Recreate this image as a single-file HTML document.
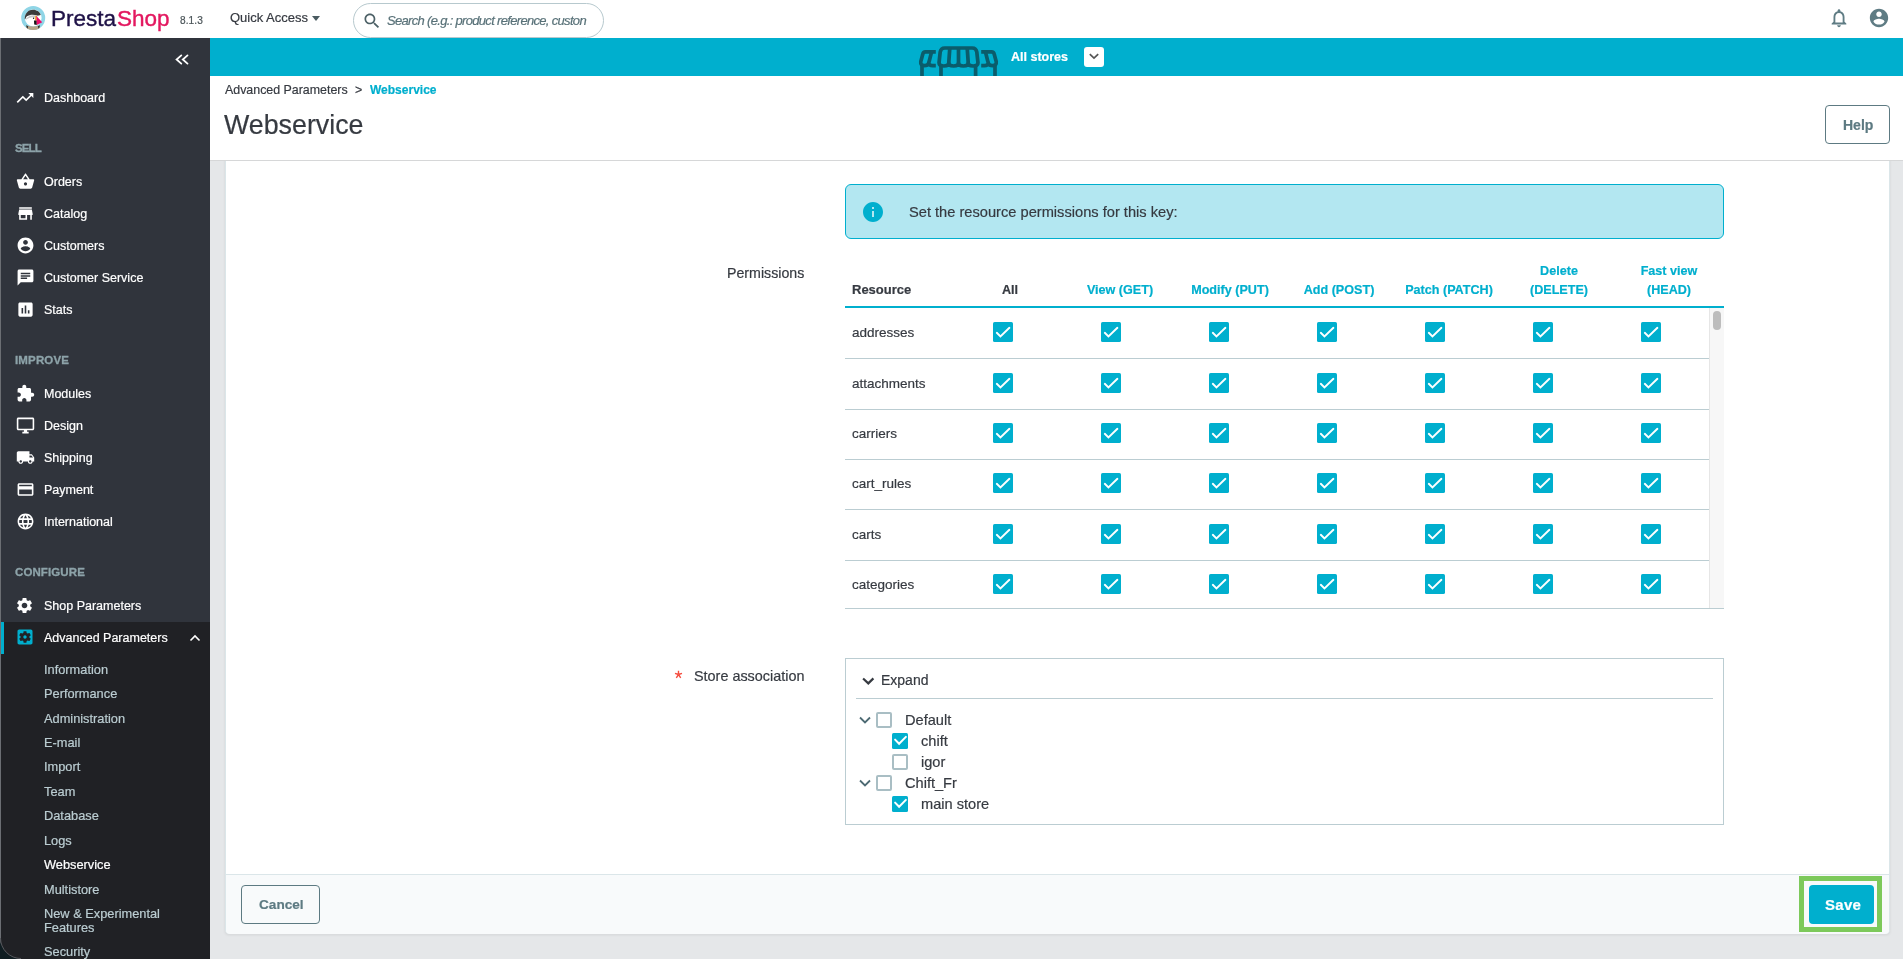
<!DOCTYPE html>
<html><head><meta charset="utf-8"><title>Webservice</title>
<style>
html,body{margin:0;padding:0;width:1903px;height:959px;overflow:hidden;background:#e5e7e9;font-family:"Liberation Sans",sans-serif}
.box{position:absolute;box-sizing:content-box}
.t{position:absolute;line-height:1;white-space:nowrap;will-change:transform;-webkit-text-stroke:0.2px currentColor}
.ic{position:absolute;overflow:visible}
</style></head><body>
<div class="box" style="left:210px;top:76px;width:1693px;height:883px;background:#e5e7e9"></div>
<div class="box" style="left:225px;top:60px;width:1663px;height:872px;background:#fff;border:1px solid #dbe6e9;border-radius:4px;box-shadow:0 1px 3px rgba(0,0,0,.08)"></div>
<div class="box" style="left:226px;top:874px;width:1663px;height:59px;background:#f8fafb;border-top:1px solid #dbe6e9;border-radius:0 0 4px 4px"></div>
<div class="box" style="left:845px;top:184px;width:877px;height:53px;background:#b3e7f1;border:1px solid #00afce;border-radius:6px"></div>
<svg class="ic" style="left:861px;top:200px;width:24px;height:24px" viewBox="0 0 24 24"><path fill="#00afce" d="M12 2C6.48 2 2 6.48 2 12s4.48 10 10 10 10-4.48 10-10S17.52 2 12 2zm1 15h-2v-6h2v6zm0-8h-2V7h2v2z"/></svg>
<div class="t" style="left:908.5px;top:204.60px;font-size:14.65px;color:#363a41;font-weight:400;font-style:normal;">Set the resource permissions for this key:</div>
<div class="t" style="left:726.5px;top:266.08px;font-size:14.2px;color:#363a41;font-weight:400;font-style:normal;">Permissions</div>
<div class="t" style="left:852px;top:283.20px;font-size:13px;color:#363a41;font-weight:700;font-style:normal;">Resource</div>
<div class="t" style="left:949.8px;width:120px;text-align:center;top:283.53px;font-size:12.6px;font-weight:700;color:#363a41">All</div>
<div class="t" style="left:1059.7px;width:120px;text-align:center;top:283.53px;font-size:12.6px;font-weight:700;color:#00afce">View (GET)</div>
<div class="t" style="left:1169.6px;width:120px;text-align:center;top:283.53px;font-size:12.6px;font-weight:700;color:#00afce">Modify (PUT)</div>
<div class="t" style="left:1279.4px;width:120px;text-align:center;top:283.53px;font-size:12.6px;font-weight:700;color:#00afce">Add (POST)</div>
<div class="t" style="left:1389.3px;width:120px;text-align:center;top:283.53px;font-size:12.6px;font-weight:700;color:#00afce">Patch (PATCH)</div>
<div class="t" style="left:1499.2px;width:120px;text-align:center;top:264.83px;font-size:12.6px;font-weight:700;color:#00afce">Delete</div>
<div class="t" style="left:1499.2px;width:120px;text-align:center;top:283.53px;font-size:12.6px;font-weight:700;color:#00afce">(DELETE)</div>
<div class="t" style="left:1609.1px;width:120px;text-align:center;top:264.83px;font-size:12.6px;font-weight:700;color:#00afce">Fast view</div>
<div class="t" style="left:1609.1px;width:120px;text-align:center;top:283.53px;font-size:12.6px;font-weight:700;color:#00afce">(HEAD)</div>
<div class="box" style="left:845px;top:306px;width:879px;height:2px;background:#00afce"></div>
<div class="box" style="left:845px;top:358px;width:864px;height:1px;background:#bbcdd2"></div>
<div class="box" style="left:845px;top:408.5px;width:864px;height:1px;background:#bbcdd2"></div>
<div class="box" style="left:845px;top:459px;width:864px;height:1px;background:#bbcdd2"></div>
<div class="box" style="left:845px;top:509px;width:864px;height:1px;background:#bbcdd2"></div>
<div class="box" style="left:845px;top:560px;width:864px;height:1px;background:#bbcdd2"></div>
<div class="box" style="left:845px;top:607.5px;width:879px;height:1px;background:#bbcdd2"></div>
<div class="box" style="left:1709px;top:308px;width:14px;height:300px;background:#f7f7f7;border-left:1px solid #e6e6e6"></div>
<div class="box" style="left:1713px;top:311px;width:8px;height:19px;background:#bdbdbd;border-radius:4px"></div>
<div class="t" style="left:852px;top:326.47px;font-size:13.5px;color:#363a41;font-weight:400;font-style:normal;">addresses</div>
<svg class="ic" style="left:993px;top:322px;width:20px;height:20px" viewBox="0 0 20 20"><rect x="0" y="0" width="20" height="20" rx="1.6" fill="#00afce"/><path d="M3.8 10.8 L7.45 14.4 L16.4 5.8" fill="none" stroke="#fff" stroke-width="1.9" stroke-linecap="round"/></svg>
<svg class="ic" style="left:1101px;top:322px;width:20px;height:20px" viewBox="0 0 20 20"><rect x="0" y="0" width="20" height="20" rx="1.6" fill="#00afce"/><path d="M3.8 10.8 L7.45 14.4 L16.4 5.8" fill="none" stroke="#fff" stroke-width="1.9" stroke-linecap="round"/></svg>
<svg class="ic" style="left:1209px;top:322px;width:20px;height:20px" viewBox="0 0 20 20"><rect x="0" y="0" width="20" height="20" rx="1.6" fill="#00afce"/><path d="M3.8 10.8 L7.45 14.4 L16.4 5.8" fill="none" stroke="#fff" stroke-width="1.9" stroke-linecap="round"/></svg>
<svg class="ic" style="left:1317px;top:322px;width:20px;height:20px" viewBox="0 0 20 20"><rect x="0" y="0" width="20" height="20" rx="1.6" fill="#00afce"/><path d="M3.8 10.8 L7.45 14.4 L16.4 5.8" fill="none" stroke="#fff" stroke-width="1.9" stroke-linecap="round"/></svg>
<svg class="ic" style="left:1425px;top:322px;width:20px;height:20px" viewBox="0 0 20 20"><rect x="0" y="0" width="20" height="20" rx="1.6" fill="#00afce"/><path d="M3.8 10.8 L7.45 14.4 L16.4 5.8" fill="none" stroke="#fff" stroke-width="1.9" stroke-linecap="round"/></svg>
<svg class="ic" style="left:1533px;top:322px;width:20px;height:20px" viewBox="0 0 20 20"><rect x="0" y="0" width="20" height="20" rx="1.6" fill="#00afce"/><path d="M3.8 10.8 L7.45 14.4 L16.4 5.8" fill="none" stroke="#fff" stroke-width="1.9" stroke-linecap="round"/></svg>
<svg class="ic" style="left:1641px;top:322px;width:20px;height:20px" viewBox="0 0 20 20"><rect x="0" y="0" width="20" height="20" rx="1.6" fill="#00afce"/><path d="M3.8 10.8 L7.45 14.4 L16.4 5.8" fill="none" stroke="#fff" stroke-width="1.9" stroke-linecap="round"/></svg>
<div class="t" style="left:852px;top:376.97px;font-size:13.5px;color:#363a41;font-weight:400;font-style:normal;">attachments</div>
<svg class="ic" style="left:993px;top:372.5px;width:20px;height:20px" viewBox="0 0 20 20"><rect x="0" y="0" width="20" height="20" rx="1.6" fill="#00afce"/><path d="M3.8 10.8 L7.45 14.4 L16.4 5.8" fill="none" stroke="#fff" stroke-width="1.9" stroke-linecap="round"/></svg>
<svg class="ic" style="left:1101px;top:372.5px;width:20px;height:20px" viewBox="0 0 20 20"><rect x="0" y="0" width="20" height="20" rx="1.6" fill="#00afce"/><path d="M3.8 10.8 L7.45 14.4 L16.4 5.8" fill="none" stroke="#fff" stroke-width="1.9" stroke-linecap="round"/></svg>
<svg class="ic" style="left:1209px;top:372.5px;width:20px;height:20px" viewBox="0 0 20 20"><rect x="0" y="0" width="20" height="20" rx="1.6" fill="#00afce"/><path d="M3.8 10.8 L7.45 14.4 L16.4 5.8" fill="none" stroke="#fff" stroke-width="1.9" stroke-linecap="round"/></svg>
<svg class="ic" style="left:1317px;top:372.5px;width:20px;height:20px" viewBox="0 0 20 20"><rect x="0" y="0" width="20" height="20" rx="1.6" fill="#00afce"/><path d="M3.8 10.8 L7.45 14.4 L16.4 5.8" fill="none" stroke="#fff" stroke-width="1.9" stroke-linecap="round"/></svg>
<svg class="ic" style="left:1425px;top:372.5px;width:20px;height:20px" viewBox="0 0 20 20"><rect x="0" y="0" width="20" height="20" rx="1.6" fill="#00afce"/><path d="M3.8 10.8 L7.45 14.4 L16.4 5.8" fill="none" stroke="#fff" stroke-width="1.9" stroke-linecap="round"/></svg>
<svg class="ic" style="left:1533px;top:372.5px;width:20px;height:20px" viewBox="0 0 20 20"><rect x="0" y="0" width="20" height="20" rx="1.6" fill="#00afce"/><path d="M3.8 10.8 L7.45 14.4 L16.4 5.8" fill="none" stroke="#fff" stroke-width="1.9" stroke-linecap="round"/></svg>
<svg class="ic" style="left:1641px;top:372.5px;width:20px;height:20px" viewBox="0 0 20 20"><rect x="0" y="0" width="20" height="20" rx="1.6" fill="#00afce"/><path d="M3.8 10.8 L7.45 14.4 L16.4 5.8" fill="none" stroke="#fff" stroke-width="1.9" stroke-linecap="round"/></svg>
<div class="t" style="left:852px;top:427.47px;font-size:13.5px;color:#363a41;font-weight:400;font-style:normal;">carriers</div>
<svg class="ic" style="left:993px;top:423px;width:20px;height:20px" viewBox="0 0 20 20"><rect x="0" y="0" width="20" height="20" rx="1.6" fill="#00afce"/><path d="M3.8 10.8 L7.45 14.4 L16.4 5.8" fill="none" stroke="#fff" stroke-width="1.9" stroke-linecap="round"/></svg>
<svg class="ic" style="left:1101px;top:423px;width:20px;height:20px" viewBox="0 0 20 20"><rect x="0" y="0" width="20" height="20" rx="1.6" fill="#00afce"/><path d="M3.8 10.8 L7.45 14.4 L16.4 5.8" fill="none" stroke="#fff" stroke-width="1.9" stroke-linecap="round"/></svg>
<svg class="ic" style="left:1209px;top:423px;width:20px;height:20px" viewBox="0 0 20 20"><rect x="0" y="0" width="20" height="20" rx="1.6" fill="#00afce"/><path d="M3.8 10.8 L7.45 14.4 L16.4 5.8" fill="none" stroke="#fff" stroke-width="1.9" stroke-linecap="round"/></svg>
<svg class="ic" style="left:1317px;top:423px;width:20px;height:20px" viewBox="0 0 20 20"><rect x="0" y="0" width="20" height="20" rx="1.6" fill="#00afce"/><path d="M3.8 10.8 L7.45 14.4 L16.4 5.8" fill="none" stroke="#fff" stroke-width="1.9" stroke-linecap="round"/></svg>
<svg class="ic" style="left:1425px;top:423px;width:20px;height:20px" viewBox="0 0 20 20"><rect x="0" y="0" width="20" height="20" rx="1.6" fill="#00afce"/><path d="M3.8 10.8 L7.45 14.4 L16.4 5.8" fill="none" stroke="#fff" stroke-width="1.9" stroke-linecap="round"/></svg>
<svg class="ic" style="left:1533px;top:423px;width:20px;height:20px" viewBox="0 0 20 20"><rect x="0" y="0" width="20" height="20" rx="1.6" fill="#00afce"/><path d="M3.8 10.8 L7.45 14.4 L16.4 5.8" fill="none" stroke="#fff" stroke-width="1.9" stroke-linecap="round"/></svg>
<svg class="ic" style="left:1641px;top:423px;width:20px;height:20px" viewBox="0 0 20 20"><rect x="0" y="0" width="20" height="20" rx="1.6" fill="#00afce"/><path d="M3.8 10.8 L7.45 14.4 L16.4 5.8" fill="none" stroke="#fff" stroke-width="1.9" stroke-linecap="round"/></svg>
<div class="t" style="left:852px;top:477.47px;font-size:13.5px;color:#363a41;font-weight:400;font-style:normal;">cart_rules</div>
<svg class="ic" style="left:993px;top:473px;width:20px;height:20px" viewBox="0 0 20 20"><rect x="0" y="0" width="20" height="20" rx="1.6" fill="#00afce"/><path d="M3.8 10.8 L7.45 14.4 L16.4 5.8" fill="none" stroke="#fff" stroke-width="1.9" stroke-linecap="round"/></svg>
<svg class="ic" style="left:1101px;top:473px;width:20px;height:20px" viewBox="0 0 20 20"><rect x="0" y="0" width="20" height="20" rx="1.6" fill="#00afce"/><path d="M3.8 10.8 L7.45 14.4 L16.4 5.8" fill="none" stroke="#fff" stroke-width="1.9" stroke-linecap="round"/></svg>
<svg class="ic" style="left:1209px;top:473px;width:20px;height:20px" viewBox="0 0 20 20"><rect x="0" y="0" width="20" height="20" rx="1.6" fill="#00afce"/><path d="M3.8 10.8 L7.45 14.4 L16.4 5.8" fill="none" stroke="#fff" stroke-width="1.9" stroke-linecap="round"/></svg>
<svg class="ic" style="left:1317px;top:473px;width:20px;height:20px" viewBox="0 0 20 20"><rect x="0" y="0" width="20" height="20" rx="1.6" fill="#00afce"/><path d="M3.8 10.8 L7.45 14.4 L16.4 5.8" fill="none" stroke="#fff" stroke-width="1.9" stroke-linecap="round"/></svg>
<svg class="ic" style="left:1425px;top:473px;width:20px;height:20px" viewBox="0 0 20 20"><rect x="0" y="0" width="20" height="20" rx="1.6" fill="#00afce"/><path d="M3.8 10.8 L7.45 14.4 L16.4 5.8" fill="none" stroke="#fff" stroke-width="1.9" stroke-linecap="round"/></svg>
<svg class="ic" style="left:1533px;top:473px;width:20px;height:20px" viewBox="0 0 20 20"><rect x="0" y="0" width="20" height="20" rx="1.6" fill="#00afce"/><path d="M3.8 10.8 L7.45 14.4 L16.4 5.8" fill="none" stroke="#fff" stroke-width="1.9" stroke-linecap="round"/></svg>
<svg class="ic" style="left:1641px;top:473px;width:20px;height:20px" viewBox="0 0 20 20"><rect x="0" y="0" width="20" height="20" rx="1.6" fill="#00afce"/><path d="M3.8 10.8 L7.45 14.4 L16.4 5.8" fill="none" stroke="#fff" stroke-width="1.9" stroke-linecap="round"/></svg>
<div class="t" style="left:852px;top:528.47px;font-size:13.5px;color:#363a41;font-weight:400;font-style:normal;">carts</div>
<svg class="ic" style="left:993px;top:524px;width:20px;height:20px" viewBox="0 0 20 20"><rect x="0" y="0" width="20" height="20" rx="1.6" fill="#00afce"/><path d="M3.8 10.8 L7.45 14.4 L16.4 5.8" fill="none" stroke="#fff" stroke-width="1.9" stroke-linecap="round"/></svg>
<svg class="ic" style="left:1101px;top:524px;width:20px;height:20px" viewBox="0 0 20 20"><rect x="0" y="0" width="20" height="20" rx="1.6" fill="#00afce"/><path d="M3.8 10.8 L7.45 14.4 L16.4 5.8" fill="none" stroke="#fff" stroke-width="1.9" stroke-linecap="round"/></svg>
<svg class="ic" style="left:1209px;top:524px;width:20px;height:20px" viewBox="0 0 20 20"><rect x="0" y="0" width="20" height="20" rx="1.6" fill="#00afce"/><path d="M3.8 10.8 L7.45 14.4 L16.4 5.8" fill="none" stroke="#fff" stroke-width="1.9" stroke-linecap="round"/></svg>
<svg class="ic" style="left:1317px;top:524px;width:20px;height:20px" viewBox="0 0 20 20"><rect x="0" y="0" width="20" height="20" rx="1.6" fill="#00afce"/><path d="M3.8 10.8 L7.45 14.4 L16.4 5.8" fill="none" stroke="#fff" stroke-width="1.9" stroke-linecap="round"/></svg>
<svg class="ic" style="left:1425px;top:524px;width:20px;height:20px" viewBox="0 0 20 20"><rect x="0" y="0" width="20" height="20" rx="1.6" fill="#00afce"/><path d="M3.8 10.8 L7.45 14.4 L16.4 5.8" fill="none" stroke="#fff" stroke-width="1.9" stroke-linecap="round"/></svg>
<svg class="ic" style="left:1533px;top:524px;width:20px;height:20px" viewBox="0 0 20 20"><rect x="0" y="0" width="20" height="20" rx="1.6" fill="#00afce"/><path d="M3.8 10.8 L7.45 14.4 L16.4 5.8" fill="none" stroke="#fff" stroke-width="1.9" stroke-linecap="round"/></svg>
<svg class="ic" style="left:1641px;top:524px;width:20px;height:20px" viewBox="0 0 20 20"><rect x="0" y="0" width="20" height="20" rx="1.6" fill="#00afce"/><path d="M3.8 10.8 L7.45 14.4 L16.4 5.8" fill="none" stroke="#fff" stroke-width="1.9" stroke-linecap="round"/></svg>
<div class="t" style="left:852px;top:578.47px;font-size:13.5px;color:#363a41;font-weight:400;font-style:normal;">categories</div>
<svg class="ic" style="left:993px;top:574px;width:20px;height:20px" viewBox="0 0 20 20"><rect x="0" y="0" width="20" height="20" rx="1.6" fill="#00afce"/><path d="M3.8 10.8 L7.45 14.4 L16.4 5.8" fill="none" stroke="#fff" stroke-width="1.9" stroke-linecap="round"/></svg>
<svg class="ic" style="left:1101px;top:574px;width:20px;height:20px" viewBox="0 0 20 20"><rect x="0" y="0" width="20" height="20" rx="1.6" fill="#00afce"/><path d="M3.8 10.8 L7.45 14.4 L16.4 5.8" fill="none" stroke="#fff" stroke-width="1.9" stroke-linecap="round"/></svg>
<svg class="ic" style="left:1209px;top:574px;width:20px;height:20px" viewBox="0 0 20 20"><rect x="0" y="0" width="20" height="20" rx="1.6" fill="#00afce"/><path d="M3.8 10.8 L7.45 14.4 L16.4 5.8" fill="none" stroke="#fff" stroke-width="1.9" stroke-linecap="round"/></svg>
<svg class="ic" style="left:1317px;top:574px;width:20px;height:20px" viewBox="0 0 20 20"><rect x="0" y="0" width="20" height="20" rx="1.6" fill="#00afce"/><path d="M3.8 10.8 L7.45 14.4 L16.4 5.8" fill="none" stroke="#fff" stroke-width="1.9" stroke-linecap="round"/></svg>
<svg class="ic" style="left:1425px;top:574px;width:20px;height:20px" viewBox="0 0 20 20"><rect x="0" y="0" width="20" height="20" rx="1.6" fill="#00afce"/><path d="M3.8 10.8 L7.45 14.4 L16.4 5.8" fill="none" stroke="#fff" stroke-width="1.9" stroke-linecap="round"/></svg>
<svg class="ic" style="left:1533px;top:574px;width:20px;height:20px" viewBox="0 0 20 20"><rect x="0" y="0" width="20" height="20" rx="1.6" fill="#00afce"/><path d="M3.8 10.8 L7.45 14.4 L16.4 5.8" fill="none" stroke="#fff" stroke-width="1.9" stroke-linecap="round"/></svg>
<svg class="ic" style="left:1641px;top:574px;width:20px;height:20px" viewBox="0 0 20 20"><rect x="0" y="0" width="20" height="20" rx="1.6" fill="#00afce"/><path d="M3.8 10.8 L7.45 14.4 L16.4 5.8" fill="none" stroke="#fff" stroke-width="1.9" stroke-linecap="round"/></svg>
<svg class="ic" style="left:674px;top:669.5px;width:9px;height:9px" viewBox="0 0 9 9"><path d="M4.5 0.8 V4.5 M4.5 4.5 L1 3.3 M4.5 4.5 L8 3.3 M4.5 4.5 L2.3 7.8 M4.5 4.5 L6.7 7.8" stroke="#f54c3e" stroke-width="1.4" fill="none"/></svg>
<div class="t" style="left:694px;top:668.81px;font-size:14.4px;color:#363a41;font-weight:400;font-style:normal;">Store association</div>
<div class="box" style="left:845px;top:658px;width:877px;height:165px;border:1px solid #bbcdd2"></div>
<svg class="ic" style="left:861px;top:675px;width:14px;height:12px" viewBox="0 0 14 12"><path d="M2.1 3.5 L7.3 8.4 L12.4 3.4" fill="none" stroke="#363a41" stroke-width="2.2"/></svg>
<div class="t" style="left:880.5px;top:673.15px;font-size:14px;color:#363a41;font-weight:400;font-style:normal;">Expand</div>
<div class="box" style="left:856px;top:698px;width:857px;height:1px;background:#bbcdd2"></div>
<svg class="ic" style="left:858.5px;top:715.75px;width:12px;height:8px" viewBox="0 0 12 8"><path d="M1 1.5 L6 6.5 L11 1.5" fill="none" stroke="#4d6a73" stroke-width="1.8"/></svg>
<div class="box" style="left:876px;top:712.25px;width:12px;height:12px;border:2px solid #a9bec4;border-radius:2px"></div>
<div class="t" style="left:904.5px;top:712.69px;font-size:14.6px;color:#363a41;font-weight:400;font-style:normal;">Default</div>
<svg class="ic" style="left:892px;top:733.0px;width:16px;height:16px" viewBox="0 0 16 16"><rect width="16" height="16" rx="1.5" fill="#00afce"/><path d="M3.1 6.6 L7.1 10.8 L13.9 3.9" fill="none" stroke="#fff" stroke-width="2" stroke-linecap="round"/></svg>
<div class="t" style="left:920.5px;top:733.69px;font-size:14.6px;color:#363a41;font-weight:400;font-style:normal;">chift</div>
<div class="box" style="left:892px;top:754.25px;width:12px;height:12px;border:2px solid #a9bec4;border-radius:2px"></div>
<div class="t" style="left:920.5px;top:754.69px;font-size:14.6px;color:#363a41;font-weight:400;font-style:normal;">igor</div>
<svg class="ic" style="left:858.5px;top:778.75px;width:12px;height:8px" viewBox="0 0 12 8"><path d="M1 1.5 L6 6.5 L11 1.5" fill="none" stroke="#4d6a73" stroke-width="1.8"/></svg>
<div class="box" style="left:876px;top:775.25px;width:12px;height:12px;border:2px solid #a9bec4;border-radius:2px"></div>
<div class="t" style="left:904.5px;top:775.69px;font-size:14.6px;color:#363a41;font-weight:400;font-style:normal;">Chift_Fr</div>
<svg class="ic" style="left:892px;top:796.0px;width:16px;height:16px" viewBox="0 0 16 16"><rect width="16" height="16" rx="1.5" fill="#00afce"/><path d="M3.1 6.6 L7.1 10.8 L13.9 3.9" fill="none" stroke="#fff" stroke-width="2" stroke-linecap="round"/></svg>
<div class="t" style="left:920.5px;top:796.69px;font-size:14.6px;color:#363a41;font-weight:400;font-style:normal;">main store</div>
<div class="box" style="left:241px;top:885px;width:77px;height:37px;border:1px solid #5d7a82;border-radius:4px"></div>
<div class="t" style="left:258.5px;top:898.49px;font-size:13.6px;color:#5d7a82;font-weight:700;font-style:normal;">Cancel</div>
<div class="box" style="left:1799px;top:876px;width:73px;height:46px;border:5px solid #7dc95b"></div>
<div class="box" style="left:1809px;top:885px;width:65px;height:39px;background:#00afce;border-radius:4px"></div>
<div class="t" style="left:1825.2px;top:897.30px;font-size:15px;color:#ffffff;font-weight:700;font-style:normal;letter-spacing:0.3px;">Save</div>
<div class="box" style="left:0;top:38px;width:210px;height:921px;background:#30343c"></div>
<div class="box" style="left:0;top:622px;width:210px;height:337px;background:#202125"></div>
<div class="box" style="left:0;top:622px;width:4px;height:32px;background:#00afce"></div>
<div class="box" style="left:0;top:38px;width:1px;height:921px;background:#6b6e73"></div>
<svg class="ic" style="left:0;top:938px;width:21px;height:21px" viewBox="0 0 21 21"><path d="M0 0 V21 H21 A21 21 0 0 1 0 0 Z" fill="#0f1d22"/><path d="M0.5 0 A20.5 20.5 0 0 0 21 20.5" fill="none" stroke="#55585d" stroke-width="1"/></svg>
<svg class="ic" style="left:174px;top:52px;width:16px;height:16px" viewBox="0 0 16 16"><path d="M7.3 3.4 L2.6 7.5 L7.3 11.6 M13.5 3.4 L8.8 7.5 L13.5 11.6" fill="none" stroke="#fff" stroke-width="1.8" stroke-linecap="round"/></svg>
<svg class="ic" style="left:15px;top:87.5px;width:20px;height:20px" viewBox="0 0 24 24"><path fill="#ffffff" d="M16 6l2.29 2.29-4.88 4.88-4-4L2 16.59 3.41 18l6-6 4 4 6.3-6.29L22 12V6z"/></svg>
<div class="t" style="left:44px;top:91.62px;font-size:12.5px;color:#ffffff;font-weight:400;font-style:normal;">Dashboard</div>
<div class="t" style="left:15px;top:143.47px;font-size:11.5px;color:#8da3a9;font-weight:700;font-style:normal;letter-spacing:-0.9px;-webkit-text-stroke:0.3px #8da3a9;">SELL</div>
<svg class="ic" style="left:15.5px;top:172.0px;width:19px;height:19px" viewBox="0 0 24 24"><path fill="#ffffff" d="M17.21 9l-4.38-6.56c-.19-.28-.51-.42-.83-.42-.32 0-.64.14-.83.43L6.79 9H2c-.55 0-1 .45-1 1 0 .09.01.18.04.27l2.54 9.27c.23.84 1 1.46 1.92 1.46h13c.92 0 1.69-.62 1.93-1.46l2.54-9.27L23 10c0-.55-.45-1-1-1h-4.79zM9 9l3-4.4L15 9H9zm3 8c-1.1 0-2-.9-2-2s.9-2 2-2 2 .9 2 2-.9 2-2 2z"/></svg>
<div class="t" style="left:44px;top:175.72px;font-size:12.5px;color:#ffffff;font-weight:400;font-style:normal;">Orders</div>
<svg class="ic" style="left:15.5px;top:204.0px;width:19px;height:19px" viewBox="0 0 24 24"><path fill="#ffffff" d="M20 4H4v2h16V4zm1 10v-2l-1-5H4l-1 5v2h1v6h10v-6h4v6h2v-6h1zm-9 4H6v-4h6v4z"/></svg>
<div class="t" style="left:44px;top:207.72px;font-size:12.5px;color:#ffffff;font-weight:400;font-style:normal;">Catalog</div>
<svg class="ic" style="left:15.5px;top:236.0px;width:19px;height:19px" viewBox="0 0 24 24"><path fill="#ffffff" d="M12 2C6.48 2 2 6.48 2 12s4.48 10 10 10 10-4.48 10-10S17.52 2 12 2zm0 3c1.66 0 3 1.340 3 3s-1.34 3-3 3-3-1.34-3-3 1.34-3 3-3zm0 14.2c-2.5 0-4.71-1.28-6-3.220.03-1.99 4-3.08 6-3.08 1.99 0 5.970 1.09 6 3.08-1.29 1.94-3.5 3.22-6 3.22z"/></svg>
<div class="t" style="left:44px;top:239.72px;font-size:12.5px;color:#ffffff;font-weight:400;font-style:normal;">Customers</div>
<svg class="ic" style="left:15.5px;top:268.0px;width:19px;height:19px" viewBox="0 0 24 24"><path fill="#ffffff" d="M20 2H4c-1.1 0-1.99.9-1.99 2L2 22l4-4h14c1.1 0 2-.9 2-2V4c0-1.1-.9-2-2-2zM6 9h12v2H6V9zm8 5H6v-2h8v2zm4-6H6V6h12v2z"/></svg>
<div class="t" style="left:44px;top:271.72px;font-size:12.5px;color:#ffffff;font-weight:400;font-style:normal;">Customer Service</div>
<svg class="ic" style="left:15.5px;top:300.0px;width:19px;height:19px" viewBox="0 0 24 24"><path fill="#ffffff" d="M19 3H5c-1.1 0-2 .9-2 2v14c0 1.1.9 2 2 2h14c1.1 0 2-.9 2-2V5c0-1.1-.9-2-2-2zM9 17H7v-7h2v7zm4 0h-2V7h2v10zm4 0h-2v-4h2v4z"/></svg>
<div class="t" style="left:44px;top:303.72px;font-size:12.5px;color:#ffffff;font-weight:400;font-style:normal;">Stats</div>
<div class="t" style="left:15px;top:355.47px;font-size:11.5px;color:#8da3a9;font-weight:700;font-style:normal;letter-spacing:0.15px;-webkit-text-stroke:0.3px #8da3a9;">IMPROVE</div>
<svg class="ic" style="left:15.5px;top:384.0px;width:19px;height:19px" viewBox="0 0 24 24"><path fill="#ffffff" d="M20.5 11H19V7c0-1.1-.9-2-2-2h-4V3.5C13 2.12 11.88 1 10.5 1S8 2.12 8 3.5V5H4c-1.1 0-1.99.9-1.99 2v3.8H3.5c1.49 0 2.7 1.21 2.7 2.7s-1.21 2.7-2.7 2.7H2V20c0 1.1.9 2 2 2h3.8v-1.5c0-1.49 1.21-2.7 2.7-2.7 1.49 0 2.7 1.21 2.7 2.7V22H17c1.1 0 2-.9 2-2v-4h1.5c1.38 0 2.5-1.12 2.5-2.5S21.88 11 20.5 11z"/></svg>
<div class="t" style="left:44px;top:387.72px;font-size:12.5px;color:#ffffff;font-weight:400;font-style:normal;">Modules</div>
<svg class="ic" style="left:15.5px;top:416.0px;width:19px;height:19px" viewBox="0 0 24 24"><path fill="#ffffff" d="M21 2H3c-1.1 0-2 .9-2 2v12c0 1.1.9 2 2 2h7v2H8v2h8v-2h-2v-2h7c1.1 0 2-.9 2-2V4c0-1.1-.9-2-2-2zm0 14H3V4h18v12z"/></svg>
<div class="t" style="left:44px;top:419.72px;font-size:12.5px;color:#ffffff;font-weight:400;font-style:normal;">Design</div>
<svg class="ic" style="left:15.5px;top:448.0px;width:19px;height:19px" viewBox="0 0 24 24"><path fill="#ffffff" d="M20 8h-3V4H3c-1.1 0-2 .9-2 2v11h2c0 1.66 1.34 3 3 3s3-1.34 3-3h6c0 1.66 1.34 3 3 3s3-1.34 3-3h2v-5l-3-4zM6 18.5c-.83 0-1.5-.67-1.5-1.5s.67-1.5 1.5-1.5 1.5.67 1.5 1.5-.67 1.5-1.5 1.5zm13.5-9l1.960 2.5H17V9.5h2.5zm-1.5 9c-.83 0-1.5-.67-1.5-1.5s.67-1.5 1.5-1.5 1.5.67 1.5 1.5-.67 1.5-1.5 1.5z"/></svg>
<div class="t" style="left:44px;top:451.72px;font-size:12.5px;color:#ffffff;font-weight:400;font-style:normal;">Shipping</div>
<svg class="ic" style="left:15.5px;top:480.0px;width:19px;height:19px" viewBox="0 0 24 24"><path fill="#ffffff" d="M20 4H4c-1.11 0-1.99.89-1.99 2L2 18c0 1.11.89 2 2 2h16c1.11 0 2-.89 2-2V6c0-1.11-.89-2-2-2zm0 14H4v-6h16v6zm0-10H4V6h16v2z"/></svg>
<div class="t" style="left:44px;top:483.72px;font-size:12.5px;color:#ffffff;font-weight:400;font-style:normal;">Payment</div>
<svg class="ic" style="left:15.5px;top:511.99999999999994px;width:19px;height:19px" viewBox="0 0 24 24"><path fill="#ffffff" d="M11.99 2C6.47 2 2 6.48 2 12s4.47 10 9.99 10C17.52 22 22 17.52 22 12S17.52 2 11.99 2zm6.93 6h-2.95c-.32-1.25-.78-2.45-1.38-3.56 1.84.63 3.37 1.91 4.33 3.560zM12 4.04c.83 1.2 1.48 2.53 1.91 3.96h-3.82c.43-1.43 1.08-2.76 1.91-3.96zM4.26 14C4.1 13.36 4 12.69 4 12s.1-1.36.26-2h3.38c-.08.66-.14 1.32-.14 2 0 .68.06 1.34.14 2H4.26zm.82 2h2.95c.32 1.25.78 2.45 1.38 3.56-1.84-.63-3.37-1.9-4.33-3.56zm2.95-8H5.08c.96-1.66 2.49-2.93 4.33-3.56C8.81 5.55 8.35 6.75 8.03 8zM12 19.96c-.83-1.2-1.48-2.53-1.91-3.96h3.82c-.43 1.43-1.08 2.76-1.91 3.96zM14.34 14H9.66c-.09-.66-.16-1.32-.16-2 0-.68.07-1.35.16-2h4.68c.09.65.16 1.32.16 2 0 .68-.07 1.34-.16 2zm.25 5.56c.6-1.11 1.06-2.31 1.38-3.56h2.95c-.96 1.65-2.49 2.93-4.33 3.56zM16.36 14c.08-.66.14-1.32.14-2 0-.68-.06-1.34-.14-2h3.38c.16.64.26 1.31.26 2s-.1 1.36-.26 2h-3.38z"/></svg>
<div class="t" style="left:44px;top:515.72px;font-size:12.5px;color:#ffffff;font-weight:400;font-style:normal;">International</div>
<div class="t" style="left:15px;top:567.47px;font-size:11.5px;color:#8da3a9;font-weight:700;font-style:normal;letter-spacing:0.1px;-webkit-text-stroke:0.3px #8da3a9;">CONFIGURE</div>
<svg class="ic" style="left:14.7px;top:596.0px;width:19px;height:19px" viewBox="0 0 24 24"><path fill="#ffffff" d="M19.14 12.94c.04-.3.06-.61.06-.94 0-.32-.02-.64-.07-.94l2.03-1.58c.18-.14.23-.41.12-.61l-1.92-3.32c-.12-.22-.37-.29-.59-.22l-2.39.96c-.5-.38-1.03-.7-1.62-.94l-.36-2.54c-.04-.24-.24-.41-.48-.41h-3.84c-.24 0-.43.17-.47.41l-.36 2.54c-.59.24-1.13.57-1.62.94l-2.39-.96c-.22-.08-.47 0-.59.22L2.74 8.87c-.12.21-.08.47.12.61l2.03 1.58c-.05.3-.09.63-.09.94s.02.64.07.94l-2.03 1.58c-.18.14-.23.41-.12.61l1.92 3.32c.12.22.37.29.59.22l2.39-.96c.5.38 1.030.7 1.62.94l.36 2.54c.05.24.24.41.48.41h3.84c.24 0 .44-.17.47-.41l.36-2.54c.59-.24 1.13-.56 1.62-.94l2.39.96c.22.08.47 0 .59-.22l1.92-3.32c.12-.22.07-.47-.12-.61l-2.01-1.58zM12 15.6c-1.98 0-3.6-1.62-3.6-3.6s1.62-3.6 3.6-3.6 3.6 1.62 3.6 3.6-1.62 3.6-3.6 3.6z"/></svg>
<div class="t" style="left:44px;top:599.72px;font-size:12.5px;color:#ffffff;font-weight:400;font-style:normal;">Shop Parameters</div>
<svg class="ic" style="left:14.9px;top:627.2px;width:20px;height:20px" viewBox="0 0 24 24"><path fill="#00afce" d="M12 10c-1.1 0-2 .9-2 2s.9 2 2 2 2-.9 2-2-.9-2-2-2zm7-7H5c-1.11 0-2 .9-2 2v14c0 1.1.89 2 2 2h14c1.11 0 2-.9 2-2V5c0-1.1-.89-2-2-2zm-1.75 9c0 .23-.02.46-.05.68l1.48 1.16c.13.11.17.3.08.45l-1.4 2.42c-.09.15-.27.21-.43.15l-1.74-.7c-.36.28-.76.51-1.18.69l-.26 1.85c-.03.17-.18.3-.35.3h-2.8c-.17 0-.32-.13-.35-.29l-.26-1.85c-.43-.18-.82-.41-1.18-.69l-1.74.7c-.16.06-.34 0-.43-.15l-1.4-2.42c-.09-.15-.05-.34.08-.45l1.48-1.16c-.03-.23-.05-.46-.05-.69 0-.23.02-.46.05-.68l-1.48-1.16c-.13-.11-.17-.3-.08-.45l1.4-2.42c.09-.15.27-.21.43-.15l1.74.7c.36-.28.76-.51 1.18-.69l.26-1.85c.03-.17.18-.3.35-.3h2.8c.17 0 .32.13.35.29l.26 1.85c.43.18.82.41 1.18.69l1.74-.7c.16-.06.34 0 .43.15l1.4 2.42c.09.15.05.34-.08.45l-1.48 1.16c.03.23.05.46.05.69z"/></svg>
<div class="t" style="left:44px;top:631.62px;font-size:12.5px;color:#ffffff;font-weight:400;font-style:normal;">Advanced Parameters</div>
<svg class="ic" style="left:189px;top:632px;width:12px;height:12px" viewBox="0 0 12 12"><path d="M1.5 8.5 L6 4 L10.5 8.5" fill="none" stroke="#fff" stroke-width="1.6"/></svg>
<div class="t" style="left:44px;top:663.66px;font-size:12.8px;color:#bbcdd2;font-weight:400;font-style:normal;">Information</div>
<div class="t" style="left:44px;top:688.11px;font-size:12.8px;color:#bbcdd2;font-weight:400;font-style:normal;">Performance</div>
<div class="t" style="left:44px;top:712.56px;font-size:12.8px;color:#bbcdd2;font-weight:400;font-style:normal;">Administration</div>
<div class="t" style="left:44px;top:737.01px;font-size:12.8px;color:#bbcdd2;font-weight:400;font-style:normal;">E-mail</div>
<div class="t" style="left:44px;top:761.46px;font-size:12.8px;color:#bbcdd2;font-weight:400;font-style:normal;">Import</div>
<div class="t" style="left:44px;top:785.91px;font-size:12.8px;color:#bbcdd2;font-weight:400;font-style:normal;">Team</div>
<div class="t" style="left:44px;top:810.36px;font-size:12.8px;color:#bbcdd2;font-weight:400;font-style:normal;">Database</div>
<div class="t" style="left:44px;top:834.81px;font-size:12.8px;color:#bbcdd2;font-weight:400;font-style:normal;">Logs</div>
<div class="t" style="left:44px;top:859.26px;font-size:12.8px;color:#ffffff;font-weight:400;font-style:normal;">Webservice</div>
<div class="t" style="left:44px;top:883.71px;font-size:12.8px;color:#bbcdd2;font-weight:400;font-style:normal;">Multistore</div>
<div class="t" style="left:44px;top:907.96px;font-size:12.8px;color:#bbcdd2;font-weight:400;font-style:normal;">New &amp; Experimental</div>
<div class="t" style="left:44px;top:921.66px;font-size:12.8px;color:#bbcdd2;font-weight:400;font-style:normal;">Features</div>
<div class="t" style="left:44px;top:946.26px;font-size:12.8px;color:#bbcdd2;font-weight:400;font-style:normal;">Security</div>
<div class="box" style="left:0;top:0;width:1903px;height:38px;background:#fff"></div>
<svg class="ic" style="left:18px;top:3px;width:30px;height:30px" viewBox="0 0 30 30">
<circle cx="15.2" cy="15" r="10.2" fill="#fff" stroke="#8fd5e6" stroke-width="3.6"/>
<path d="M6.7 16 C6.7 10 10.5 6.7 15 6.7 C19 6.7 22 9 22.8 12 L19.5 12.8 C16 11.2 12 11.4 8.6 13.4 L7.2 16.2 Z" fill="#3b3b3b"/>
<path d="M8.2 15.4 C10.5 12.6 15.5 11.3 19.6 12.7 L18.8 14.8 C15 13.6 11.2 14.2 8 16.8 Z" fill="#c9c9c9"/>
<circle cx="15.6" cy="15.3" r="0.7" fill="#111"/>
<path d="M17.3 12.8 L18.9 13 L18.6 17.8 L17 17.6Z" fill="#f4a21f"/>
<path d="M16 17.5 L18.8 17.5 L18.8 22 L16.2 21.5 Z" fill="#161616"/>
<path d="M18.4 13.1 L24.2 19.2 L18.8 21.9 Z" fill="#ec0d6a"/>
<path d="M8.2 22.2 Q15 25 21.9 22.2 L21.2 25.6 Q15 28.6 9 25.6 Z" fill="#b7a386"/>
<path d="M8.2 22.2 L10.2 23.2 L9.6 25.4 L8.7 24.8Z M21.9 22.2 L19.9 23.2 L20.5 25.4 L21.4 24.8Z" fill="#2e2e2e"/>
</svg>
<div class="t" style="left:50.5px;top:7.75px;font-size:22.5px;color:#1f1247;font-weight:400;font-style:normal;-webkit-text-stroke:0.4px #1f1247;">Presta</div>
<div class="t" style="left:116.5px;top:7.75px;font-size:22.5px;color:#e3175f;font-weight:400;font-style:normal;-webkit-text-stroke:0.4px #e3175f;">Shop</div>
<div class="t" style="left:180px;top:15.95px;font-size:10.1px;color:#4a5458;font-weight:400;font-style:normal;letter-spacing:0.1px;">8.1.3</div>
<div class="t" style="left:229.5px;top:11.00px;font-size:13px;color:#363a41;font-weight:400;font-style:normal;">Quick Access</div>
<svg class="ic" style="left:312px;top:16px;width:8px;height:5px" viewBox="0 0 8 5"><path d="M0 0 L8 0 L4 5Z" fill="#4a5b61"/></svg>
<div class="box" style="left:353px;top:3px;width:249px;height:33px;border:1px solid #b7c9ce;border-radius:18px;background:#fff"></div>
<svg class="ic" style="left:362px;top:11px;width:20px;height:20px" viewBox="0 0 24 24"><path fill="#4c6066" d="M15.5 14h-.79l-.28-.27C15.41 12.59 16 11.11 16 9.5 16 5.91 13.09 3 9.5 3S3 5.91 3 9.5 5.910 16 9.5 16c1.61 0 3.09-.59 4.23-1.57l.27.28v.79l5 4.99L20.49 19l-4.99-5zm-6 0C7.01 14 5 11.99 5 9.5S7.01 5 9.5 5 14 7.01 14 9.5 11.99 14 9.5 14z"/></svg>
<div class="t" style="left:387px;top:14.00px;font-size:13px;color:#587178;font-weight:400;font-style:italic;letter-spacing:-0.68px;">Search (e.g.: product reference, custon</div>
<svg class="ic" style="left:1828px;top:6.7px;width:22px;height:22px" viewBox="0 0 24 24"><path fill="#5f7c84" d="M12 22c1.1 0 2-.9 2-2h-4c0 1.1.9 2 2 2zm6-6v-5c0-3.07-1.64-5.64-4.5-6.32V4c0-.83-.67-1.5-1.5-1.5s-1.5.67-1.5 1.5v.68C7.63 5.36 6 7.92 6 11v5l-2 2v1h16v-1l-2-2zm-2 1H8v-6c0-2.48 1.51-4.5 4-4.5s4 2.02 4 4.5v6z"/></svg>
<svg class="ic" style="left:1868.2px;top:6.5px;width:22px;height:22px" viewBox="0 0 24 24"><path fill="#5f7c84" d="M12 2C6.48 2 2 6.48 2 12s4.48 10 10 10 10-4.48 10-10S17.52 2 12 2zm0 3c1.66 0 3 1.340 3 3s-1.34 3-3 3-3-1.34-3-3 1.34-3 3-3zm0 14.2c-2.5 0-4.71-1.28-6-3.220.03-1.99 4-3.08 6-3.08 1.99 0 5.970 1.09 6 3.08-1.29 1.94-3.5 3.22-6 3.22z"/></svg>
<div class="box" style="left:210px;top:38px;width:1693px;height:38px;background:#00afce"></div>
<svg class="ic" style="left:914px;top:42px;width:90px;height:34px" viewBox="0 0 90 34">
<g fill="none" stroke="#0b5c6b" stroke-width="3.7" stroke-linejoin="round">
<path d="M25 21 L26.2 10 Q26.8 6 30.8 6 H58.2 Q62.2 6 62.8 10 L64 21"/>
<path d="M25 20.5 Q25 24 29.9 24 Q34.75 24 34.75 21 Q34.75 24 39.6 24 Q44.5 24 44.5 21 Q44.5 24 49.4 24 Q54.25 24 54.25 21 Q54.25 24 59.1 24 Q64 24 64 20.5"/>
<path d="M35.8 6 L34.75 21 M44.5 6 V21 M53.2 6 L54.25 21"/>
<path d="M21.8 9.9 H11.5 Q9.2 9.9 8.7 12.5 L6.8 19.5 Q6.2 23.6 10.3 23.6 Q13.8 23.6 14.6 21.5 Q15.2 23.6 18.5 23.6 L21.8 23.6"/>
<path d="M17.6 9.9 L14.6 21.5"/>
<path d="M67.2 9.9 H77.5 Q79.8 9.9 80.3 12.5 L82.2 19.5 Q82.8 23.6 78.7 23.6 Q75.2 23.6 74.4 21.5 Q73.8 23.6 70.5 23.6 L67.2 23.6"/>
<path d="M71.4 9.9 L74.4 21.5"/>
<path d="M8 23.5 V35 M27 23 V35 M61.6 23 V35 M81 23.5 V35"/>
</g></svg>
<div class="t" style="left:1011px;top:51.22px;font-size:12.5px;color:#ffffff;font-weight:700;font-style:normal;">All stores</div>
<div class="box" style="left:1084px;top:47px;width:20px;height:20px;background:#fff;border-radius:3px"></div>
<svg class="ic" style="left:1088px;top:51px;width:12px;height:12px" viewBox="0 0 12 12"><path d="M1.8 3.2 L6 7.2 L10.2 3.2" fill="none" stroke="#555555" stroke-width="1.7"/></svg>
<div class="box" style="left:210px;top:76px;width:1693px;height:84px;background:#fff"></div>
<div class="box" style="left:210px;top:159.5px;width:1693px;height:1.5px;background:#d6d7d8"></div>
<div class="t" style="left:224.5px;top:84.10px;font-size:12.4px;color:#363a41;font-weight:400;font-style:normal;">Advanced Parameters</div>
<div class="t" style="left:355px;top:84.10px;font-size:12.4px;color:#363a41;font-weight:400;font-style:normal;">&gt;</div>
<div class="t" style="left:370px;top:84.24px;font-size:12px;color:#00afce;font-weight:700;font-style:normal;">Webservice</div>
<div class="t" style="left:224.3px;top:111.51px;font-size:26.8px;color:#363a41;font-weight:400;font-style:normal;">Webservice</div>
<div class="box" style="left:1825px;top:105px;width:63px;height:37px;border:1px solid #5d7a82;border-radius:4px"></div>
<div class="t" style="left:1842.5px;top:118.05px;font-size:14px;color:#5d7a82;font-weight:700;font-style:normal;">Help</div>
</body></html>
